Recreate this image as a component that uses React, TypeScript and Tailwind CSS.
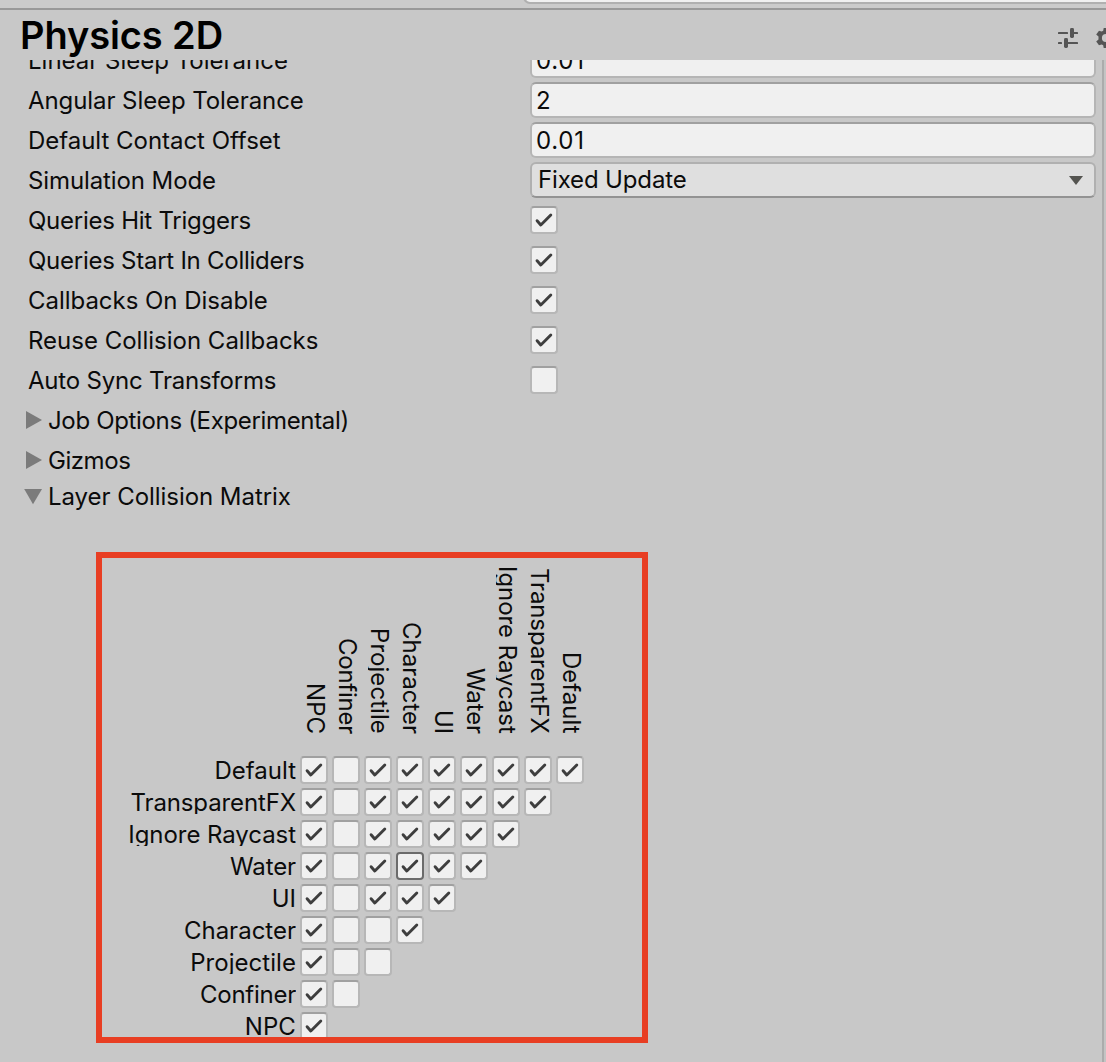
import React from "react";

const layers = [
  { name: "Default", tracking: "tracking-[0px]" },
  { name: "TransparentFX", tracking: "tracking-[-0.12px]" },
  { name: "Ignore Raycast", tracking: "tracking-[-0.06px]" },
  { name: "Water", tracking: "tracking-[-0.1px]" },
  { name: "UI", tracking: "tracking-[0px]" },
  { name: "Character", tracking: "tracking-[0px]" },
  { name: "Projectile", tracking: "tracking-[0.05px]" },
  { name: "Confiner", tracking: "tracking-[-0.25px]" },
  { name: "NPC", tracking: "tracking-[0.1px]" },
];
const columns = [...layers].reverse();

const matrix = ["101111111", "10111111", "1011111", "101111", "10111", "1001", "100", "10", "1"];

function Check({ on = true, focused = false }: { on?: boolean; focused?: boolean }) {
  return (
    <div
      className={
        "h-7 w-7 shrink-0 rounded-[4px] border-2 bg-[#f0f0f0] " +
        (focused ? "border-[#6b6b6b]" : "border-[#b7b7b7] border-t-[#a0a0a0]")
      }
    >
      {on && (
        <svg viewBox="0 0 24 24" className="block h-6 w-6" fill="none" stroke="#3e3e3e" strokeWidth="2.9" strokeLinecap="round" strokeLinejoin="round">
          <path d="M5.1 12.7 8.8 17 18.8 7" />
        </svg>
      )}
    </div>
  );
}

function Row({ label, tracking, children }: { label: string; tracking: string; children?: React.ReactNode }) {
  return (
    <div className="flex h-10 shrink-0 items-center">
      <div className={"w-[530px] shrink-0 pt-0.5 pl-7 " + tracking}>{label}</div>
      {children}
    </div>
  );
}

function Field({ value }: { value: string }) {
  return (
    <div className="flex h-9 w-[566px] items-center rounded-[6px] border-2 border-[#b5b5b5] border-t-[#a0a0a0] bg-[#f0f0f0] pt-0.5 pl-1 tracking-[0.75px]">
      {value}
    </div>
  );
}

function Foldout({ label, tracking, open = false }: { label: string; tracking: string; open?: boolean }) {
  return (
    <div className="flex h-10 shrink-0 items-center pl-6">
      <svg viewBox="0 0 18 18" className="h-[18px] w-[18px]" fill="#7b7b7b">
        {open ? <path d="M0.2 2h17.8L9 17.2z" /> : <path d="M2 0v18L18 9z" />}
      </svg>
      <span className={"pt-0.5 pl-1.5 " + tracking}>{label}</span>
    </div>
  );
}

export default function App() {
  return (
    <div className="flex h-[1062px] w-[1106px] flex-col overflow-hidden bg-[#c8c8c8] font-['Inter',sans-serif] text-[24px] leading-[30px] whitespace-nowrap text-[#0b0b0b]">
      <div className="flex h-2.5 shrink-0 justify-end overflow-hidden border-b-2 border-[#999999] bg-[#cbcbcb]">
        <div className="-mt-6 h-7 w-[583px] rounded-bl-[7px] border-b-2 border-l-2 border-[#b0b0b0] bg-[#f0f0f0]" />
      </div>
      <header className="flex h-[50px] shrink-0 items-center">
        <h1 className="w-[1058px] shrink-0 pl-5 text-[38px] leading-[50px] font-semibold tracking-[-0.1px] text-black">Physics 2D</h1>
        <svg viewBox="0 0 20 20" className="mt-1.5 h-5 w-5 shrink-0" fill="#555555">
          <rect x="0" y="4" width="10" height="2" rx="0.6" />
          <rect x="12" y="0" width="4" height="10" rx="1.4" />
          <rect x="15" y="4" width="5" height="2" rx="0.6" />
          <rect x="0" y="14" width="4" height="2" rx="0.6" />
          <rect x="6" y="10" width="4" height="10" rx="1.4" />
          <rect x="9" y="14" width="11" height="2" rx="0.6" />
        </svg>
        <svg viewBox="0 0 20 20" className="mt-1.5 ml-[18px] h-5 w-5 shrink-0" fill="#555555" fillRule="evenodd">
          <path d="M7.7 0h4.6l.5 2.7 1.5.9L17 2.7l2.3 3.9-2.1 1.9v3l2.1 1.9-2.3 3.9-2.7-.9-1.5.9-.5 2.6H7.7l-.5-2.6-1.5-.9-2.7.9-2.8-3.9 2.3-1.9v-3L.2 6.6 3 2.7l2.7.9 1.5-.9zM10 5.9a4.1 4.1 0 1 0 0 8.2 4.1 4.1 0 0 0 0-8.2z" />
        </svg>
      </header>
      <main className="flex min-h-0 flex-1 overflow-hidden">
        <div className="-mt-5 flex w-[1102px] shrink-0 flex-col">
          <Row label="Linear Sleep Tolerance" tracking="tracking-[0px]"><Field value="0.01" /></Row>
          <Row label="Angular Sleep Tolerance" tracking="tracking-[-0.08px]"><Field value="2" /></Row>
          <Row label="Default Contact Offset" tracking="tracking-[-0.03px]"><Field value="0.01" /></Row>
          <Row label="Simulation Mode" tracking="tracking-[-0.1px]">
            <div className="flex h-9 w-[566px] items-center justify-between rounded-[6px] border-2 border-[#b0b0b0] border-b-[#939393] bg-[#dfdfdf] pr-[11px] pl-1.5">
              <span className="tracking-[-0.15px]">Fixed Update</span>
              <svg viewBox="0 0 14 9" className="h-[9px] w-3.5" fill="#545450"><path d="M0 0h14L7 9z" /></svg>
            </div>
          </Row>
          <Row label="Queries Hit Triggers" tracking="tracking-[-0.25px]"><Check /></Row>
          <Row label="Queries Start In Colliders" tracking="tracking-[-0.26px]"><Check /></Row>
          <Row label="Callbacks On Disable" tracking="tracking-[-0.03px]"><Check /></Row>
          <Row label="Reuse Collision Callbacks" tracking="tracking-[0px]"><Check /></Row>
          <Row label="Auto Sync Transforms" tracking="tracking-[-0.2px]"><Check on={false} /></Row>
          <Foldout label="Job Options (Experimental)" tracking="tracking-[-0.34px]" />
          <Foldout label="Gizmos" tracking="tracking-[-0.45px]" />
          <div className="-mt-1"><Foldout label="Layer Collision Matrix" tracking="tracking-[-0.05px]" open /></div>

          <section className="mt-9 ml-24 h-[491px] w-[552px] shrink-0 overflow-hidden border-[6px] border-[#e83e23]">
            <div className="ml-[198px] flex h-[176px] gap-1">
              {columns.map(({ name, tracking }) => (
                <div key={name} className="h-[176px] w-7 overflow-hidden pl-1">
                  <div className="h-[176px] w-6 overflow-hidden">
                    <div className={"-ml-1 flex h-[176px] w-[30px] items-center justify-end leading-[30px] [writing-mode:vertical-rl] " + tracking}>
                      <div className="h-full w-[30px] text-right">{name}</div>
                    </div>
                  </div>
                </div>
              ))}
            </div>
            <div className="mt-[22px] flex flex-col gap-1">
              {matrix.map((cells, r) => (
                <div key={layers[r].name} className="flex h-7 shrink-0 gap-1">
                  <div className={"h-[26px] w-[194px] overflow-hidden text-right leading-[30px] " + layers[r].tracking}>{layers[r].name}</div>
                  {cells.split("").map((c, i) => (
                    <Check key={i} on={c === "1"} focused={r === 3 && i === 3} />
                  ))}
                </div>
              ))}
            </div>
          </section>
        </div>
        <div className="w-1 shrink-0 border-l-2 border-[#acacac] bg-[#c4c4c4]" />
      </main>
    </div>
  );
}
